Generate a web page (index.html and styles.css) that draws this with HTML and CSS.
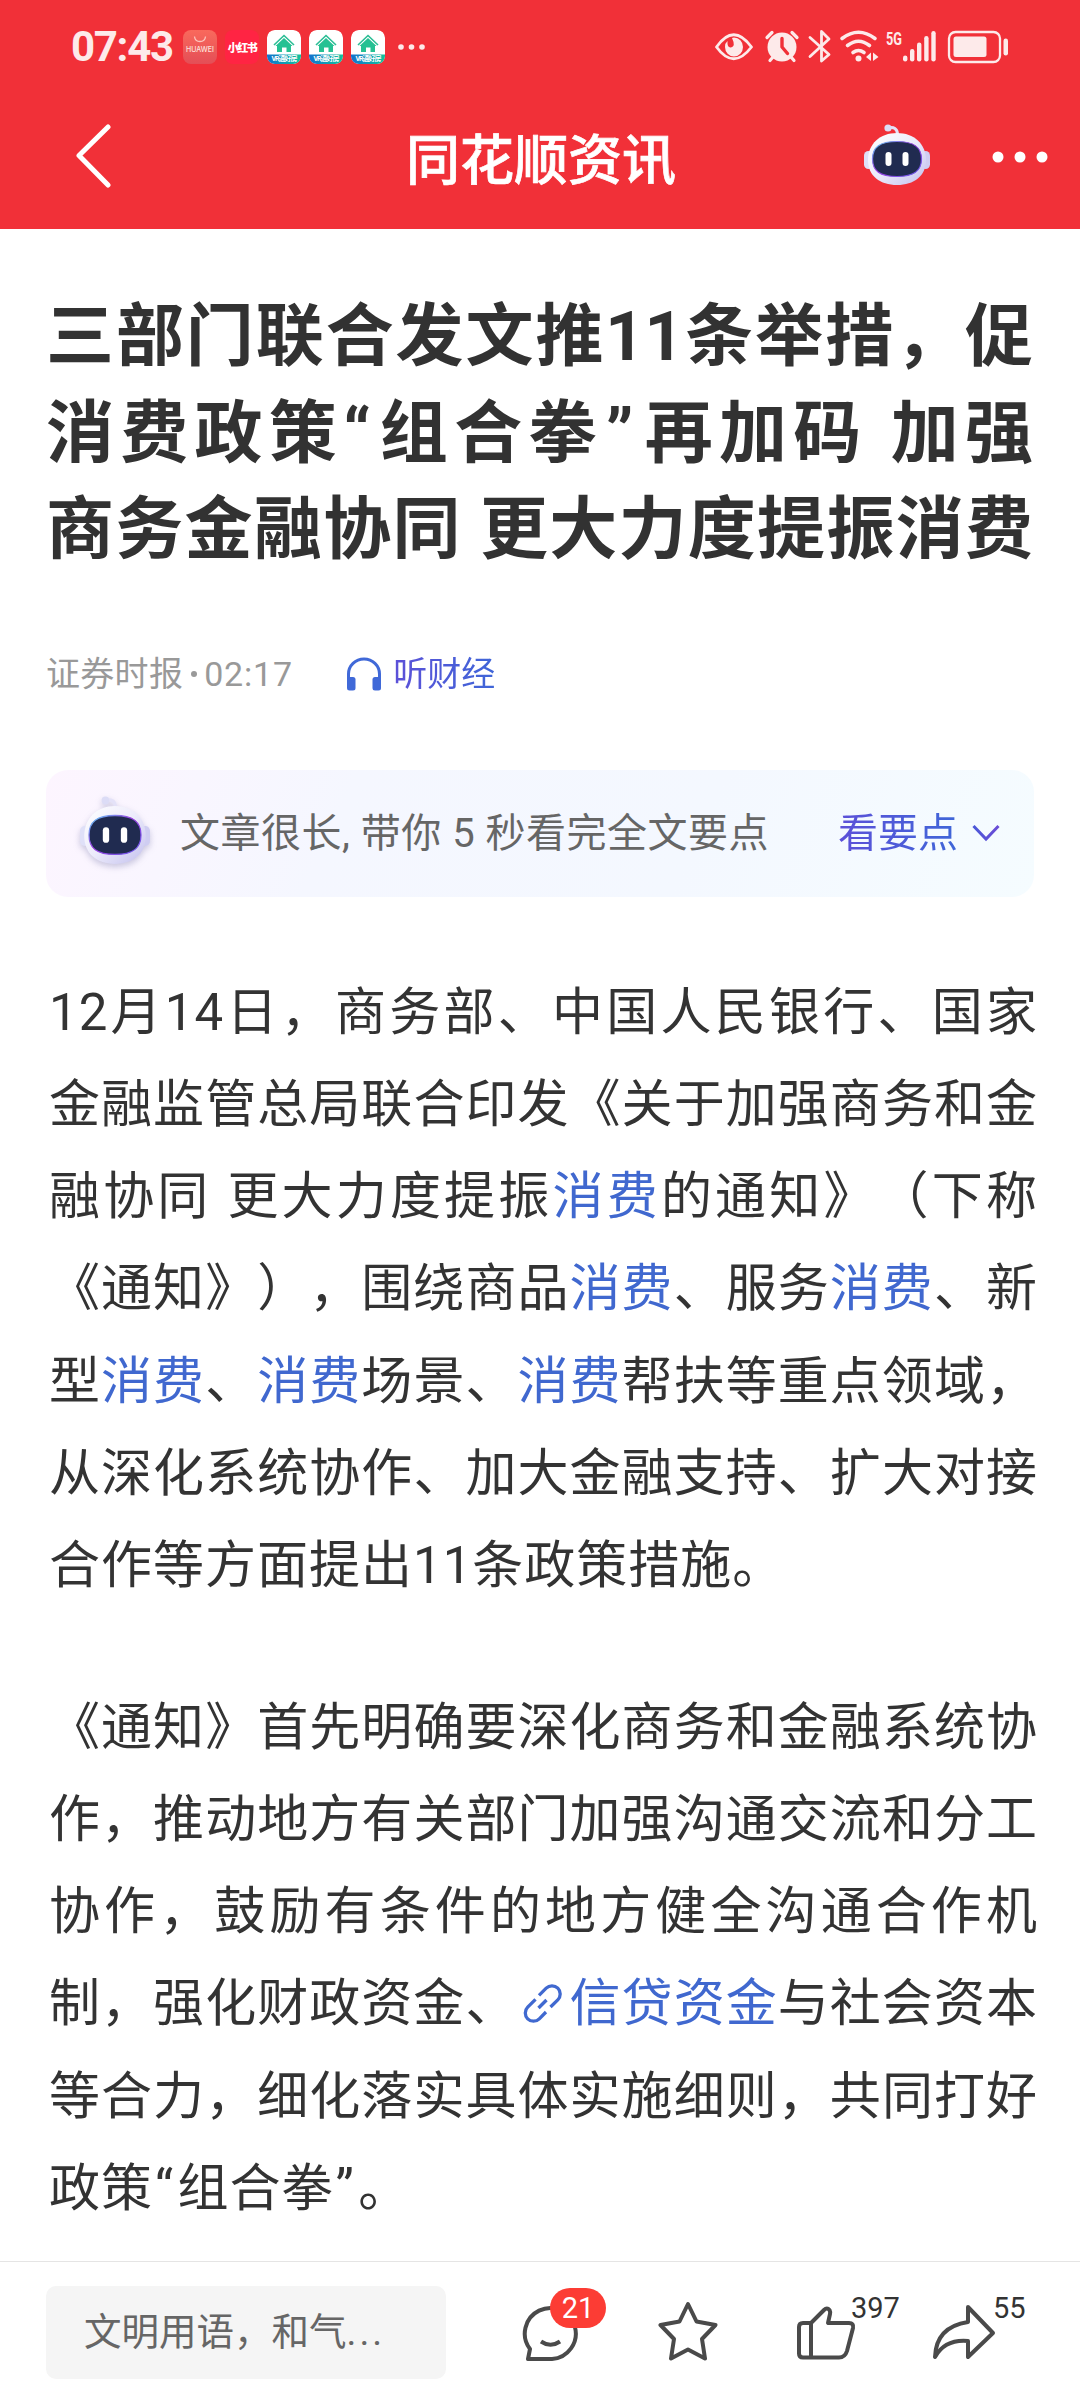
FILE: index.html
```html
<!DOCTYPE html>
<html lang="zh-CN">
<head>
<meta charset="utf-8">
<title>同花顺资讯</title>
<link rel="stylesheet" href="styles.css">
</head>
<body>
<svg class="defs" width="0" height="0" aria-hidden="true">
  <defs>
    <linearGradient id="shell" x1="0" y1="0" x2="1" y2="1"><stop offset="0" stop-color="#fff"/><stop offset=".5" stop-color="#ecebfb"/><stop offset="1" stop-color="#c3c0ee"/></linearGradient>
    <linearGradient id="rim" x1="0" y1="0" x2="1" y2="1"><stop offset="0" stop-color="#5fd0f5"/><stop offset=".45" stop-color="#9a3fe0"/><stop offset="1" stop-color="#6a5cf0"/></linearGradient>
    <linearGradient id="vr" x1="0" y1="0" x2="1" y2="0"><stop offset="0" stop-color="#1272cf"/><stop offset="1" stop-color="#12c39a"/></linearGradient>
    <linearGradient id="chev" x1="0" y1="0" x2="1" y2="0"><stop offset="0" stop-color="#4a58d8"/><stop offset="1" stop-color="#6b4cd6"/></linearGradient>
    <symbol id="robot" viewBox="0 0 66 62" preserveAspectRatio="none">
      <path d="M24 4Q33 2 33.500 10" fill="none" stroke="#e4e2f8" stroke-width="3"/>
      <circle cx="24" cy="4" r="3.600" fill="#dcdcf6"/>
      <rect x="0" y="27" width="9" height="18" rx="4.500" fill="#dfe0f8"/>
      <rect x="57" y="27" width="9" height="18" rx="4.500" fill="#cfcdf2"/>
      <path d="M33 9C50 9 62 20 62 36C62 52 50 61 33 61C16 61 4 52 4 36C4 20 16 9 33 9Z" fill="url(#shell)"/>
      <path d="M33 17.500C50 17.500 57.500 23 57.500 35C57.500 47 50 52.500 33 52.500C16 52.500 8.500 47 8.500 35C8.500 23 16 17.500 33 17.500Z" fill="#202b50" stroke="url(#rim)" stroke-width="1.200"/>
      <rect x="21.500" y="28" width="6" height="14" rx="3" fill="#fff"/>
      <rect x="38.500" y="28" width="6" height="14" rx="3" fill="#fff"/>
    </symbol>
    <symbol id="house" viewBox="0 0 34 34">
      <rect width="34" height="34" rx="7" fill="#fff"/>
      <path d="M0 24.500H34V27Q34 34 27 34H7Q0 34 0 27Z" fill="url(#vr)"/>
      <path d="M7 15L17 5.500L27 15" fill="none" stroke="#2bbd95" stroke-width="1.600"/>
      <path d="M17 8L25.500 16H24V22H19.500V17.500H15V22H10V16H8.500Z" fill="#25c193"/>
    </symbol>
  </defs>
</svg>
<header class="top">
  <div class="status">
    <div class="status-left">
      <span class="time">07:43</span>
      <span class="app huawei"><svg width="34" height="18" viewBox="0 0 34 18"><path d="M11.500 6.500Q12 11.500 17 11.500Q22 11.500 22.500 6.500" fill="none" stroke="#fcc4bc" stroke-width="1.300"/></svg><b>HUAWEI</b></span>
      <span class="app red">小红书</span>
      <span class="app vr"><svg width="34" height="34"><use href="#house"/></svg><b>VR通好房</b></span>
      <span class="app vr"><svg width="34" height="34"><use href="#house"/></svg><b>VR通好房</b></span>
      <span class="app vr"><svg width="34" height="34"><use href="#house"/></svg><b>VR通好房</b></span>
      <svg class="more-apps" width="27" height="6" viewBox="0 0 27 6" fill="#fdeaea"><circle cx="3" cy="3" r="2.800"/><circle cx="13.500" cy="3" r="2.800"/><circle cx="24" cy="3" r="2.800"/></svg>
    </div>
    <svg class="status-right" width="294" height="48" viewBox="0 -10 294 48" fill="#fdeaea">
      <path d="M1.500 18Q18.500-6.500 36.500 18Q18.500 41.500 1.500 18Z" fill="none" stroke="#fdeaea" stroke-width="2.800" stroke-linejoin="round"/>
      <path d="M19 8.500A9 9.500 0 1 1 10 18Q10 14 12.500 12Q12 19 16 18.500Q21 17.500 17 9Z"/>
      <circle cx="67" cy="18" r="14.500"/><path d="M52 8.500L57 3.500M82 8.500L77 3.500M55 31.500L58 28M79 31.500L76 28" stroke="#fdeaea" stroke-width="3.200" stroke-linecap="round"/><path d="M67 9.500V18L72.500 24.500" fill="none" stroke="#f03038" stroke-width="3.400" stroke-linecap="round" stroke-linejoin="round"/>
      <path d="M95 8.500L114 25.500L106.500 32V2.500L114 10L95 27.500" fill="none" stroke="#fdeaea" stroke-width="2.800" stroke-linecap="round" stroke-linejoin="round"/>
      <g fill="none" stroke="#fdeaea" stroke-width="3.600" stroke-linecap="round"><path d="M127 9.500Q143.500-3 160 9.500M132.500 16.500Q143.500 8 154.500 16.500M138 23.500Q143.500 19.500 149 23.500"/></g><circle cx="143.500" cy="29.500" r="3"/>
      <path d="M156 23.500V32L151 28ZM158 23.500V32L163.500 28Z"/>
      <text x="171" y="15.500" class="fiveg" textLength="16" lengthAdjust="spacingAndGlyphs">5G</text>
      <rect x="188" y="26.500" width="4.400" height="6" rx="2.200"/><rect x="195" y="20" width="4.400" height="12.500" rx="2.200"/><rect x="202" y="13.500" width="4.400" height="19" rx="2.200"/><rect x="209.200" y="7" width="4.400" height="25.500" rx="2.200"/><rect x="216.300" y="2" width="4.400" height="30.500" rx="2.200"/>
      <rect x="234" y="3" width="51" height="30" rx="6.500" fill="none" stroke="#fdeaea" stroke-width="2.300"/><rect x="238.500" y="7.500" width="33" height="20.500" rx="2.500"/><rect x="288.500" y="9.500" width="4.500" height="17" rx="2.200"/>
    </svg>
  </div>
  <nav class="nav">
    <svg class="back" width="36" height="64" viewBox="0 0 36 64"><path d="M33 3L4 31.500L33 61" fill="none" stroke="#fff" stroke-width="5" stroke-linecap="round" stroke-linejoin="round"/></svg>
    <h1>同花顺资讯</h1>
    <svg class="bot" width="66" height="62"><use href="#robot"/></svg>
    <svg class="dots" width="56" height="12" viewBox="0 0 56 12" fill="#fff"><circle cx="6" cy="6" r="5.500"/><circle cx="28" cy="6" r="5.500"/><circle cx="50" cy="6" r="5.500"/></svg>
  </nav>
</header>
<main>
  <h2 class="title"><span>三部门联合发文推11条举措，促</span><span>消费政策<i class="quote">“</i>组合拳<i class="quote close">”</i>再加码 加强</span><span>商务金融协同 更大力度提振消费</span></h2>
  <div class="meta">
    <span class="src">证券时报</span><i class="sep"></i><span class="hour">02:17</span>
    <svg width="36" height="34" viewBox="0 0 36 34"><path d="M2.500 26V17A15.500 15 0 0 1 33.500 17V26" fill="none" stroke="#4069d8" stroke-width="3"/><rect x="1" y="20" width="8.500" height="13.500" rx="2.500" fill="#4069d8"/><rect x="26.500" y="20" width="8.500" height="13.500" rx="2.500" fill="#4069d8"/></svg>
    <span class="listen">听财经</span>
  </div>
  <section class="digest">
    <svg class="digest-bot" width="70" height="69"><use href="#robot"/></svg>
    <p>文章很长, 带你 5 秒看完全文要点</p>
    <span class="points">看要点</span>
    <svg width="30" height="20" viewBox="0 0 30 20"><path d="M2.500 3L15 16L27.500 3" fill="none" stroke="url(#chev)" stroke-width="3"/></svg>
  </section>
  <p class="para"><span>12月14日，商务部、中国人民银行、国家</span><span>金融监管总局联合印发《关于加强商务和金</span><span>融协同 更大力度提振<a>消费</a>的通知》（下称</span><span>《通知》），围绕商品<a>消费</a>、服务<a>消费</a>、新</span><span>型<a>消费</a>、<a>消费</a>场景、<a>消费</a>帮扶等重点领域，</span><span>从深化系统协作、加大金融支持、扩大对接</span><span class="last">合作等方面提出11条政策措施。</span></p>
  <p class="para second"><span>《通知》首先明确要深化商务和金融系统协</span><span>作，推动地方有关部门加强沟通交流和分工</span><span>协作，鼓励有条件的地方健全沟通合作机</span><span>制，强化财政资金、<a><svg class="link" width="52" height="44" viewBox="-2.500 0 52 44"><g fill="none" stroke="#4069d0" stroke-width="3.300"><path d="M19.500 14.400L26.700 7.200A8.200 8.200 0 0 1 38.300 18.800L31 26"/><path d="M16 18.400L8.200 26.200A8.200 8.200 0 0 0 19.800 37.800L26.500 31"/><path d="M19 27L27 19"/></g></svg>信贷资金</a>与社会资本</span><span>等合力，细化落实具体实施细则，共同打好</span><span class="last">政策<i class="quote">“</i>组合拳<i class="quote close">”</i>。</span></p>
</main>
<footer class="bar">
  <div class="input">文明用语，和气<span class="ell">...</span></div>
  <div class="act"><svg width="60" height="60" viewBox="0 0 60 60"><path d="M8 56H32A25.500 25.500 0 1 0 10 46Z" fill="none" stroke="#4a4a4a" stroke-width="4" stroke-linejoin="round"/><path d="M21 38.500Q30.500 45 40 38.500" fill="none" stroke="#4a4a4a" stroke-width="4"/></svg><em class="badge">21</em></div>
  <div class="act star"><svg width="60" height="60" viewBox="0 0 60 60"><path d="M30 3L38.500 20.500L57.500 24L44 38L47 57.500L30 48.500L13 57.500L16 38L2.500 24L21.500 20.500Z" fill="none" stroke="#4a4a4a" stroke-width="4" stroke-linejoin="round"/></svg></div>
  <div class="act like"><svg width="60" height="56" viewBox="0 0 60 56"><path d="M15 18L28 5Q31 2 33.500 5Q34.500 7 34 9L32 18H53Q58 18 57 23L51 46Q49 52.500 43 52.500H7Q3 52.500 3 48.500V22Q3 18 7 18ZM15 18V52" fill="none" stroke="#4a4a4a" stroke-width="4" stroke-linejoin="round"/></svg><em>397</em></div>
  <div class="act share"><svg width="66" height="58" viewBox="0 0 66 58"><path d="M37 4L62 30L37 54V38Q14 36 4 54Q5 24 37 19Z" fill="none" stroke="#4a4a4a" stroke-width="4" stroke-linejoin="round"/></svg><em>55</em></div>
</footer>
</body>
</html>
```
FILE: styles.css
```css
* { box-sizing: border-box; margin: 0; padding: 0; }
body { width: 1080px; height: 2400px; display: flex; flex-direction: column; background: #fff; color: #333; font-family: Roboto, "Noto Sans CJK SC", sans-serif; text-spacing-trim: space-all; overflow: hidden; }
svg { display: block; flex: none; }
.defs { position: absolute; }
em, i { font-style: normal; }
.top { height: 229px; background: #f13038; color: #fff; }
.status { height: 94px; display: flex; justify-content: space-between; padding: 0 71px 0 71px; }
.status-left { display: flex; align-items: center; }
.time { width: 112px; font: 700 42px/50px Roboto, sans-serif; color: #fdeaea; letter-spacing: -1.300px; white-space: nowrap; }
.app { position: relative; width: 34px; height: 34px; margin-right: 8px; border-radius: 8px; overflow: hidden; }
.huawei { background: linear-gradient(#f9695c, #e44e56); }
.huawei b { display: block; font: 500 7px/6px Inter, sans-serif; color: #fde0dc; text-align: center; margin-top: -1px; }
.red { background: #ff2443; font: 900 11px/34px "Noto Sans CJK SC", sans-serif; letter-spacing: -1.500px; text-align: center; white-space: nowrap; }
.vr b { position: absolute; left: 0; right: 0; bottom: 1px; font: 700 7px/8px Roboto, "Noto Sans CJK SC", sans-serif; letter-spacing: -1px; text-align: center; white-space: nowrap; }
.more-apps { margin-left: 5px; }
.status-right { margin: 19px 0 0; }
.fiveg { font: 700 18px Roboto, sans-serif; }
.nav { display: flex; height: 135px; padding: 0 28px 0 75px; }
.back { margin-top: 30px; }
.nav h1 { margin-left: 295px; width: 270px; font-size: 54px; line-height: 64px; padding-top: 36px; height: 110px; font-weight: 500; -webkit-text-stroke: .7px #fff; white-space: nowrap; }
.bot { margin: 30px 0 0 188px; }
.dots { margin: 57px 0 0 62px; }
main { flex: 1; padding: 0 46px; }
.title { padding-top: 60px; font-size: 68px; font-weight: 700; color: #323232; }
.title span { display: block; width: 987px; height: 96.500px; line-height: 96px; white-space: nowrap; text-align: justify; text-align-last: justify; }
.title .quote { letter-spacing: 3px; }
.title .close { margin-left: 3px; letter-spacing: 5px; }
.meta { display: flex; align-items: center; height: 50px; margin-top: 70px; font-size: 34px; line-height: 50px; color: #999; }
.src { letter-spacing: .3px; }
.sep { width: 6px; height: 6px; border-radius: 50%; background: #999; margin: 0 7px 0 8px; }
.hour { width: 142px; letter-spacing: .8px; }
.meta svg { margin-right: 11px; }
.listen { background: linear-gradient(90deg, #5c50d8, #3f66d8); background-clip: text; -webkit-background-clip: text; color: transparent; }
.digest { display: flex; align-items: center; height: 127px; margin-top: 71px; padding: 0 33px 0 34px; border-radius: 22px; background: linear-gradient(115deg, #fdf5ff 0%, #f5f7ff 30%, #f4f8ff 65%, #f5fcff 100%); font-size: 40px; color: #666; }
.digest-bot { margin-top: -6px; filter: drop-shadow(0 3px 3px rgba(90, 90, 150, .3)); }
.digest p { width: 658px; margin-left: 30px; padding-bottom: 6px; letter-spacing: .5px; white-space: nowrap; }
.points { width: 133px; padding-bottom: 6px; background: linear-gradient(90deg, #5c50d8, #3f66d8 90%); background-clip: text; -webkit-background-clip: text; color: transparent; }
.para { width: 989px; margin: 70px 0 0 3px; font-size: 51px; letter-spacing: 1px; }
.para.second { margin-top: 69px; }
.para span { display: block; height: 92.300px; line-height: 92px; white-space: nowrap; text-align: justify; text-align-last: justify; }
.para .last { text-align-last: left; }
.para a { color: #4068cf; }
.para .quote { margin-left: 2px; letter-spacing: 4.500px; }
.link { display: inline-block; vertical-align: -4px; }
.bar { display: flex; height: 139px; border-top: 1px solid #e5e5e5; padding: 24px 0 0 46px; color: #333; }
.input { width: 400px; height: 93px; border-radius: 10px; background: #f5f5f5; padding-left: 38px; font-size: 37.500px; line-height: 92px; color: #666; white-space: nowrap; }
.ell { letter-spacing: 3px; }
.act { position: relative; margin-left: 74px; padding-top: 17px; }
.act em { position: absolute; left: 55px; top: 5px; font-size: 29px; line-height: 34px; }
.act .badge { left: 30px; top: 2px; width: 56px; height: 40px; border-radius: 20px; background: #fc3c34; color: #fff; line-height: 40px; text-align: center; }
.star { margin-left: 78px; padding-top: 15px; }
.like { margin-left: 78px; padding-top: 19px; }
.share { margin-left: 75px; padding-top: 17px; }
.share em { left: 62px; }
```
